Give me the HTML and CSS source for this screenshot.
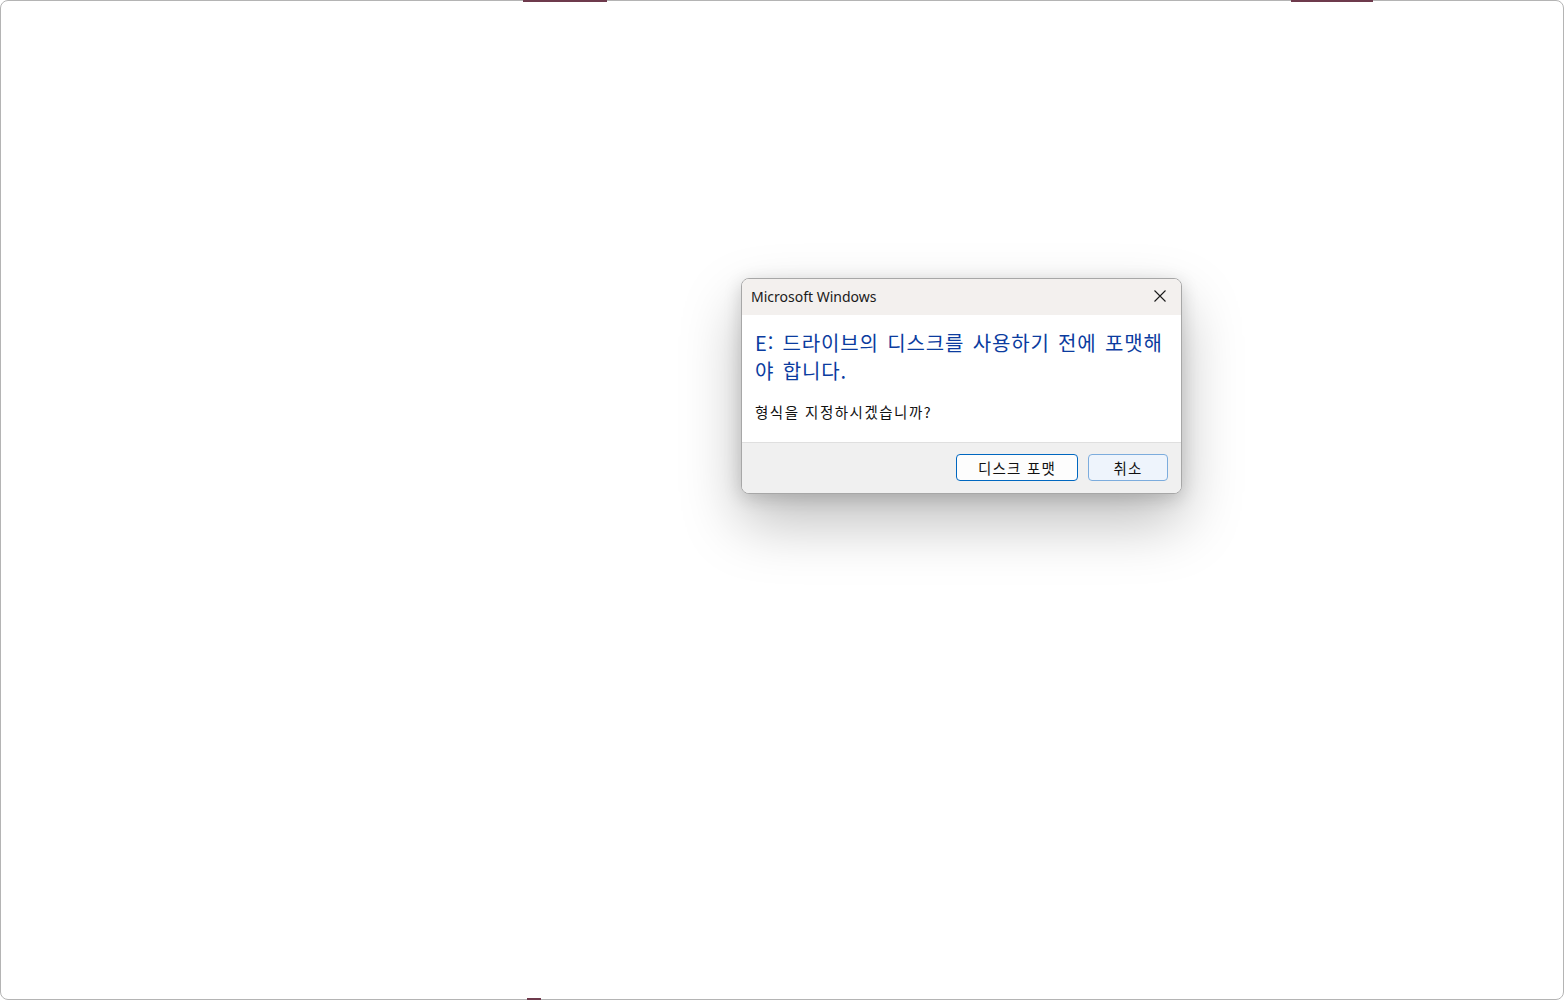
FILE: index.html
```html
<!DOCTYPE html>
<html lang="ko">
<head>
<meta charset="utf-8">
<title>Microsoft Windows</title>
<link rel="stylesheet" href="styles.css">
</head>
<body>
<div class="desk">
  <span class="edge edge-top-a"></span>
  <span class="edge edge-top-b"></span>
  <span class="edge edge-bottom"></span>
  <div class="dialog" role="dialog" aria-label="Microsoft Windows">
    <div class="titlebar">
      <span class="title">Microsoft Windows</span>
      <button class="close" aria-label="닫기">
        <svg width="12" height="12" viewBox="0 0 12 12"><path d="M0.5 0.5 L11.5 11.5 M11.5 0.5 L0.5 11.5" stroke="#1b1b1b" stroke-width="1.1" fill="none"/></svg>
      </button>
    </div>
    <div class="content">
      <p class="instruction">E: 드라이브의 디스크를 사용하기 전에 포맷해야 합니다.</p>
      <p class="question">형식을 지정하시겠습니까?</p>
    </div>
    <div class="footer">
      <button class="btn btn-primary">디스크 포맷</button>
      <button class="btn btn-secondary">취소</button>
    </div>
  </div>
</div>
</body>
</html>
```
FILE: styles.css
```css
html, body {
  margin: 0;
  padding: 0;
  background: #ffffff;
}

body {
  font-family: "Noto Sans CJK KR", "Noto Sans", sans-serif;
}

.desk {
  position: relative;
  box-sizing: border-box;
  width: 1564px;
  height: 1000px;
  border: 1px solid #b4b4b4;
  border-radius: 8px;
  background: #ffffff;
  padding: 277px 0 0 740px;
}

.edge {
  position: absolute;
  height: 2px;
  background: #6e3a4c;
}
.edge-top-a { top: -1px; left: 522px; width: 84px; }
.edge-top-b { top: -1px; left: 1290px; width: 82px; }
.edge-bottom { bottom: -1px; left: 526px; width: 14px; }

.dialog {
  width: 441px;
  box-sizing: border-box;
  border: 1px solid #a7a7a7;
  border-radius: 8px;
  overflow: hidden;
  background: #ffffff;
  box-shadow: 0 28px 60px rgba(0, 0, 0, 0.26), 0 4px 18px rgba(0, 0, 0, 0.16);
}

.titlebar {
  display: flex;
  align-items: center;
  justify-content: space-between;
  height: 36px;
  background: #f3f0ee;
  padding: 0 14px 0 9px;
}

.title {
  font-family: "Noto Sans", "Noto Sans CJK KR", sans-serif;
  font-size: 14px;
  color: #1a1a1a;
  margin-top: -1px;
}

.close {
  display: flex;
  align-items: center;
  justify-content: center;
  width: 14px;
  height: 14px;
  padding: 0;
  margin-top: -2px;
  border: 0;
  background: transparent;
}

.content {
  height: 128px;
  box-sizing: border-box;
  padding: 14px 13px 0 13px;
  background: #ffffff;
  border-bottom: 1px solid #dfdfdf;
}

.instruction {
  margin: 0;
  font-size: 20px;
  line-height: 28px;
  color: #0b3c9f;
  letter-spacing: 0.85px;
  word-spacing: 2px;
}

.question {
  margin: 17px 0 0 0;
  font-size: 14.5px;
  line-height: 20px;
  letter-spacing: 1.5px;
  color: #111111;
}

.footer {
  display: flex;
  justify-content: flex-end;
  gap: 10px;
  height: 50px;
  box-sizing: border-box;
  padding: 11px 13px 0 0;
  background: #f0f0f0;
}

.btn {
  height: 27px;
  box-sizing: border-box;
  border-radius: 4px;
  font-family: "Noto Sans CJK KR", sans-serif;
  font-size: 14.5px;
  letter-spacing: 1.2px;
  color: #111111;
  padding: 0;
  line-height: 24px;
}

.btn-primary {
  width: 122px;
  background: #fdfdfd;
  border: 1px solid #0067c0;
}

.btn-secondary {
  width: 80px;
  background: #eef4fc;
  border: 1px solid #7cacdd;
}
```
